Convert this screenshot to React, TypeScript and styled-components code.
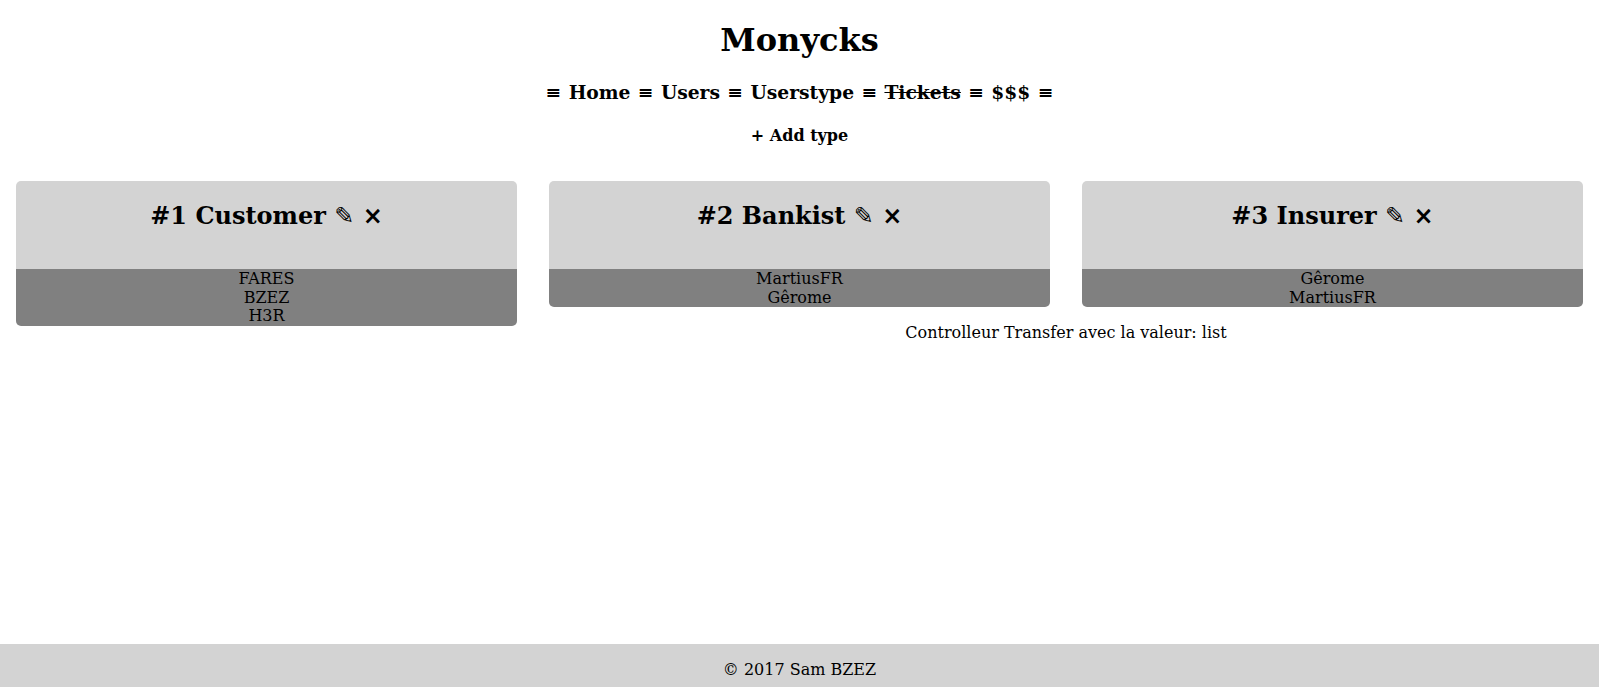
import React from "react";
import styled, { createGlobalStyle } from "styled-components";

const GlobalStyle = createGlobalStyle`
  html, body {
    margin: 0;
    padding: 0;
    background: #ffffff;
    color: #000000;
    font-family: "DejaVu Serif", "Liberation Serif", serif;
    font-size: 16px;
  }
`;

const Page = styled.div`
  min-height: 100vh;
  display: flex;
  flex-direction: column;
`;

const Main = styled.main`
  flex: 1;
  display: flex;
  flex-direction: column;
  align-items: center;
`;

const Title = styled.h1`
  font-size: 32px;
  font-weight: bold;
  margin: 21.44px 0 0;
  text-align: center;
`;

const Nav = styled.h3`
  font-size: 18.72px;
  font-weight: bold;
  margin: 21.44px 0 0;
  text-align: center;
  word-spacing: 0.85px;
`;

const NavLink = styled.a<{ $struck?: boolean }>`
  color: #000;
  text-decoration: ${(p) => (p.$struck ? "line-through" : "none")};
`;

const AddType = styled.h4`
  font-size: 16px;
  font-weight: bold;
  margin: 23.28px 0 0;
  text-align: center;
`;

const Grid = styled.div`
  align-self: stretch;
  display: grid;
  grid-template-columns: repeat(3, 1fr);
  column-gap: 32px;
  row-gap: 16px;
  align-items: start;
  padding: 0 16px;
  margin-top: 36px;
`;

const Card = styled.div<{ $span?: boolean }>`
  border-radius: 5px;
  overflow: hidden;
  grid-row: ${(p) => (p.$span ? "1 / span 2" : "1")};
`;

const CardHeader = styled.div`
  background: #d3d3d3;
  height: 88px;
  padding-top: 21px;
  box-sizing: border-box;
`;

const CardTitle = styled.h2`
  margin: 0;
  font-size: 24px;
  font-weight: bold;
  text-align: center;
  line-height: 28px;
`;

const Glyph = styled.span`
  font-family: "DejaVu Sans", sans-serif;
  font-weight: bold;
`;

const MemberList = styled.div`
  background: #808080;
  display: flex;
  flex-direction: column;
  align-items: center;
  padding-top: 1px;
`;

const Member = styled.div`
  font-size: 16px;
  line-height: 18.6px;
  text-align: center;
`;

const Status = styled.div`
  grid-column: 2 / 4;
  grid-row: 2;
  text-align: center;
  font-size: 16px;
  line-height: 19px;
`;

const Footer = styled.footer`
  background: #d3d3d3;
  text-align: center;
  padding: 16px 0 8px;
  font-size: 16px;
  line-height: 19px;
  margin-top: 16px;
`;

const types = [
  { id: 1, name: "Customer", members: ["FARES", "BZEZ", "H3R"] },
  { id: 2, name: "Bankist", members: ["MartiusFR", "Gêrome"] },
  { id: 3, name: "Insurer", members: ["Gêrome", "MartiusFR"] },
];

export default function App() {
  return (
    <Page>
      <GlobalStyle />
      <Main>
        <Title>Monycks</Title>
        <Nav>
          ≡ <NavLink href="#">Home</NavLink> ≡ <NavLink href="#">Users</NavLink> ≡{" "}
          <NavLink href="#">Userstype</NavLink> ≡ <NavLink href="#" $struck>Tickets</NavLink> ≡{" "}
          <NavLink href="#">$$$</NavLink> ≡
        </Nav>
        <AddType>+ Add type</AddType>
        <Grid>
          {types.map((t, i) => (
            <Card key={t.id} $span={i === 0} style={{ gridColumn: i + 1 }}>
              <CardHeader>
                <CardTitle>
                  #{t.id} {t.name} <Glyph>✎</Glyph> <Glyph>×</Glyph>
                </CardTitle>
              </CardHeader>
              <MemberList>
                {t.members.map((m) => (
                  <Member key={m}>{m}</Member>
                ))}
              </MemberList>
            </Card>
          ))}
          <Status>Controlleur Transfer avec la valeur: list</Status>
        </Grid>
      </Main>
      <Footer>© 2017 Sam BZEZ</Footer>
    </Page>
  );
}
